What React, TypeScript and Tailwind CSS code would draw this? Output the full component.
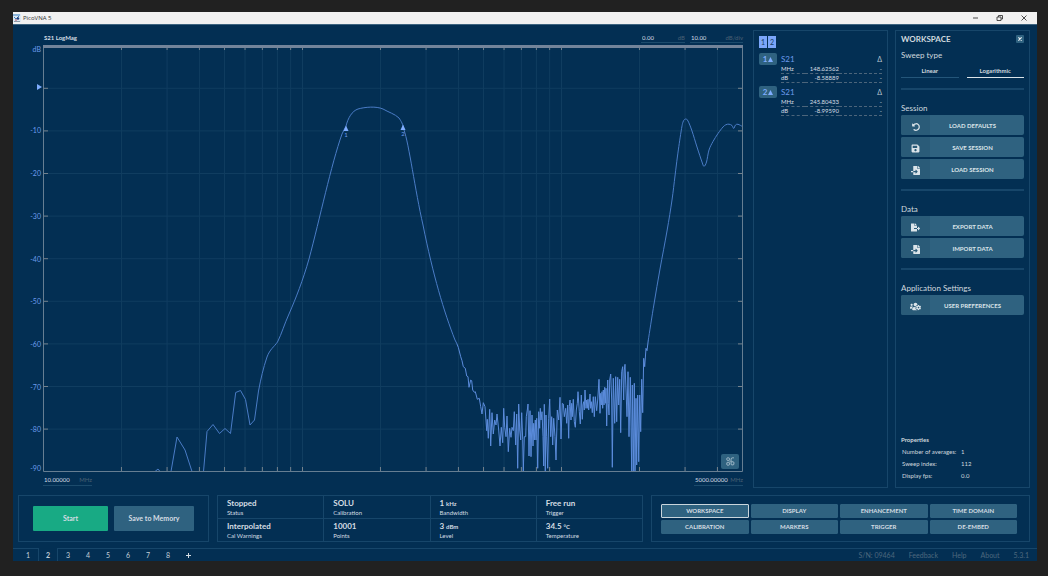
import React from "react";
import { FaUndoAlt, FaSave, FaFileExport, FaFileImport, FaUsersCog } from "react-icons/fa";

const PLOT = { left: 43.5, right: 742.5, top: 46, bottom: 471.5, decade: 259, zeroDb: 88.3, step: 42.6 };

const freqX = (mhz: number) => PLOT.left + PLOT.decade * Math.log10(mhz / 10);

const gridFreqs = [1, 10, 100, 1000].flatMap((decade) =>
  [1, 2, 3, 4, 5, 6, 7, 8, 9].map((n) => n * decade)
).filter((f) => f > 10 && f < 5000);

const gridRows = Array.from({ length: 9 }, (_, i) => PLOT.zeroDb + i * PLOT.step);

const lowBand =
  "M155 471.5L158 469L160 471.5M171 471.5L177 437L185 450L192 471.5M203.5 471.5L207 431.5L213 424.5L219.5 433.5L225 428.5L230.5 433.5L235.7 392.5L240.5 390.5L245.5 399.5L250 425L254.5 420L258.5 391C261 378 263 369 267 357C270 349 274 347 277.5 342C282 333 284 325 289 314C296 298 303 280 309 259C320 218 331 165 342 134L346 126C348 118 352 111 358 109C365 107 376 106 383 109C388 112 395 114 399 118C401 121 403 124 404 130C409 144 415 190 423 225C433 275 444 312 455 340L456.7 343.3";

const highBand: [number, number][] = [
  [648.3, 340], [654, 304], [660, 269], [667, 231], [672, 200], [675, 176], [677.5, 156], [681, 132], [683, 122],
  [685.5, 119], [688, 121], [692, 131], [697, 147], [702, 162], [704, 166.3], [706.5, 162], [709, 150], [713, 141.5],
  [718, 133.500], [723, 127], [726, 124.700], [729, 124.200], [732, 125.500], [733.700, 128.500], [735.500, 125], [738, 124.300], [742.500, 126.500],
];

// Catmull-Rom spline through the given points.
function smooth(points: [number, number][]) {
  let d = `M${points[0][0]} ${points[0][1]}`;
  for (let i = 0; i < points.length - 1; i++) {
    const a = points[Math.max(i - 1, 0)];
    const b = points[i];
    const c = points[i + 1];
    const e = points[Math.min(i + 2, points.length - 1)];
    const c1 = [b[0] + (c[0] - a[0]) / 6, b[1] + (c[1] - a[1]) / 6];
    const c2 = [c[0] - (e[0] - b[0]) / 6, c[1] - (e[1] - b[1]) / 6];
    d += `C${c1[0]} ${c1[1]} ${c2[0]} ${c2[1]} ${c[0]} ${c[1]}`;
  }
  return d;
}

// Noise floor samples at three units per pixel, measured from (440, 340).
const noise: number[] = [
  50, 10, 55, 22, 62, 50, 66, 62, 70, 80, 76, 85, 80, 108, 84, 110, 87, 142, 92, 120, 95, 122, 98, 150, 103, 157, 106, 155,
  112, 178, 118, 175, 122, 200, 126, 222,
  130, 188, 135, 200, 140, 272, 142, 238, 145, 295, 149, 208, 152, 318, 156, 218, 160, 282, 164, 240, 168, 255, 171, 222,
  176, 270, 180, 318, 184, 262, 188, 308, 191, 205, 194, 262, 198, 290, 201, 228, 205, 335, 209, 265, 213, 292, 216, 262,
  220, 272, 223, 215, 227, 315, 230, 222, 233, 385, 236, 192, 239, 270, 242, 300, 245, 218, 248, 298, 250, 393, 253, 290,
  257, 290, 259, 230, 262, 210, 264, 192, 267, 348, 270, 212, 273, 350, 276, 225, 279, 318, 281, 250, 283, 300, 286, 240,
  288, 300, 290, 235,
  293, 385, 296, 215, 299, 265, 301, 205, 303, 240, 306, 215, 309, 290, 311, 378, 313, 193, 316, 393, 318, 225, 320, 290,
  323, 385, 326, 235, 329, 177, 332, 290, 335, 230, 338, 315, 341, 235, 345, 290, 348, 360, 352, 210, 356, 240, 360, 172,
  363, 297, 367, 190, 370, 192, 373, 230, 377, 205, 380, 250, 383, 195, 386, 295, 388, 200, 390, 180, 393, 240, 395, 190,
  397, 230, 400, 178,
  403, 245, 406, 262, 409, 210, 412, 190, 414, 155, 418, 215, 421, 252, 424, 165, 427, 238, 429, 195, 431, 185, 433, 210,
  435, 150, 438, 205, 440, 180, 442, 205,
  444, 178, 446, 210, 450, 162, 452, 205, 454, 185, 457, 218, 460, 170, 463, 230, 466, 170, 470, 212, 473, 180, 477, 118,
  480, 220, 482, 160, 484, 195, 486, 155,
  488, 205, 490, 150, 492, 195, 494, 142, 496, 190, 498, 145, 500, 258, 503, 120, 505, 190, 507, 225, 509, 120, 512, 102,
  515, 180, 517, 382, 520, 115,
  524, 250, 527, 110, 530, 245, 533, 112, 536, 195, 539, 118, 542, 278, 545, 95, 548, 80, 551, 180, 553, 90, 555, 73,
  558, 150, 561, 230, 564, 95, 567, 290, 571, 112, 573, 255, 575, 393, 577, 135, 580, 393, 583, 130, 585, 393, 588, 175,
  590, 375,
  593, 165, 596, 365, 599, 165, 602, 275, 605, 118, 608, 218, 611, 55, 614, 80, 618, 25, 621, 32, 625, 0,
];

const noisePath =
  "M" +
  Array.from({ length: noise.length / 2 }, (_, i) =>
    `${(440 + noise[2 * i] / 3).toFixed(1)} ${(340 + noise[2 * i + 1] / 3).toFixed(1)}`
  ).join("L");

function Plot() {
  return (
    <svg
      className="h-0 min-h-[300px] w-full grow"
      viewBox="43 45 700 427"
      preserveAspectRatio="none"
      role="img"
      aria-label="S21 LogMag"
    >
      <g stroke="#103d60" strokeWidth="1">
        {gridFreqs.map((f) => (
          <line key={f} x1={freqX(f)} x2={freqX(f)} y1="48" y2="471" />
        ))}
        {gridRows.map((y) => (
          <line key={y} x1="44" x2="742" y1={y} y2={y} />
        ))}
      </g>
      <g stroke="#75828d" strokeWidth="1">
        {gridFreqs.map((f) => (
          <path key={f} d={`M${freqX(f)} 47v3M${freqX(f)} 467v4`} />
        ))}
        {gridRows.map((y) => (
          <path key={y} d={`M44 ${y}h4M738 ${y}h4`} />
        ))}
      </g>
      <g fill="none" strokeLinejoin="round">
        <path d={lowBand} stroke="#4a7cc6" strokeWidth="1" />
        <path d={noisePath} stroke="#5b8cdc" strokeWidth="1" />
        <path d={smooth(highBand)} stroke="#4a7cc6" strokeWidth="1" />
      </g>
      <path d="M43.5 45V471.5H742.5V45" fill="none" stroke="#667e92" strokeWidth="1" />
      <rect x="43" y="45" width="700" height="3" fill="#73849a" />
      <path d="M343.5 131l2.5-5.500 2.500 5.500zM400.500 130l2.500-5.500 2.500 5.500z" fill="#7fadff" />
      <g fill="#6c9cec" fontSize="6" fontFamily="Lato, sans-serif" textAnchor="middle">
        <text x="346" y="137">1</text>
        <text x="403" y="136">2</text>
      </g>
    </svg>
  );
}

function Underlined({ label, value, unit, className }: { label: string; value: string; unit: string; className: string }) {
  return (
    <label className={"flex items-center border-b border-[#1c4b6c] pl-px " + className}>
      <input aria-label={label} defaultValue={value} className="w-0 min-w-0 grow bg-transparent text-[#d5dde3] outline-none" />
      <span className="text-[#4a6073]">{unit}</span>
    </label>
  );
}

function Chart() {
  const levels = ["", "-10", "-20", "-30", "-40", "-50", "-60", "-70", "-80", "-90"];
  return (
    <section className="flex min-w-0 grow pt-[9px] pr-[10px] text-[6px] leading-[8px]">
      <div className="flex w-[30px] flex-col pt-[11px] pb-4 text-right text-[7px] leading-[8px] text-[#6c9cec]">
        {levels.map((level, i) => (
          <div key={i} className="flex flex-1 flex-col items-end justify-end pr-[2px]">
            {i === 0 && (
              <>
                <span className="mb-auto">dB</span>
                <svg viewBox="0 0 5 6" className="h-[6px] w-[5px] translate-x-px translate-y-[2px]">
                  <path d="M0 0l5 3-5 3z" fill="#7fadff" />
                </svg>
              </>
            )}
            {i > 0 && <span className={i === 9 ? "" : "translate-y-1/2"}>{level}</span>}
          </div>
        ))}
      </div>
      <div className="relative flex min-w-0 grow flex-col">
        <div className="flex h-[11px] items-start justify-between">
          <h2 className="pl-px font-bold text-[#d5dde3]">S21 LogMag</h2>
          <div className="flex gap-[5px]">
            <Underlined label="Reference level" value="0.00" unit="dB" className="w-11" />
            <Underlined label="Scale per division" value="10.00" unit="dB/div" className="w-[53px]" />
          </div>
        </div>
        <Plot />
        <div className="flex h-4 items-start justify-between pt-[3px]">
          <Underlined label="Start frequency" value="10.00000" unit="MHz" className="h-[11px] w-[49px]" />
          <Underlined label="Stop frequency" value="5000.00000" unit="MHz" className="h-[11px] w-[49px]" />
        </div>
        <button
          aria-label="Plot layout"
          className="absolute right-[4px] bottom-[19px] flex h-[15px] w-[18px] items-center justify-center rounded-[2px] bg-[#2f6280]"
        >
          <svg viewBox="0 0 16 16" className="size-[9px]" fill="none" stroke="#b5cad6" strokeWidth="1.500">
            <rect x="1.500" y="1.500" width="4.500" height="4.500" rx="1" />
            <rect x="1.500" y="9.500" width="4.500" height="5" rx="1" />
            <rect x="9" y="8.500" width="5" height="5.500" rx="1.500" />
            <path d="M9 9V4a2.500 2.500 0 0 1 2.500-2.500h2.500M6 7.500h2" />
          </svg>
        </button>
      </div>
    </section>
  );
}

function MarkerEntry({ id, freq, level }: { id: string; freq: string; level: string }) {
  return (
    <div className="flex items-start gap-1">
      <button className="flex h-3 w-[18px] shrink-0 items-center justify-center gap-px rounded-[2px] bg-[#2f6280] text-[8px] font-bold text-[#7fadff]">
        {id}
        <svg viewBox="0 0 5 5" className="size-[5px]">
          <path d="M2.500 0L5 5H0z" fill="#7fadff" />
        </svg>
      </button>
      <table className="w-full border-collapse text-[6px] leading-[8px] text-[#d5dde3]">
        <caption className="h-3 caption-top text-left text-[8px] leading-[12px] text-[#6c9cec]">
          <span className="flex justify-between">
            S21
            <span className="text-[7px] text-[#b8c6cf]">Δ</span>
          </span>
        </caption>
        <tbody>
          <tr className="border-b border-dashed border-[#4c657b]">
            <td className="w-6">MHz</td>
            <td className="w-[34px] text-right">{freq}</td>
            <td className="text-right">-</td>
          </tr>
          <tr className="border-b border-dashed border-[#4c657b]">
            <td>dB</td>
            <td className="text-right">{level}</td>
            <td className="text-right">-</td>
          </tr>
        </tbody>
      </table>
    </div>
  );
}

function Markers() {
  return (
    <section className="mt-[5px] flex w-[135px] shrink-0 flex-col border border-[#17466a] px-[5px] pt-[5px]">
      <div className="mb-[5px] flex gap-px text-[7px] text-[#143a5c]">
        <button className="h-3 w-2 bg-[#7ba6fa]">1</button>
        <button className="h-3 w-2 bg-[#7ba6fa]">2</button>
      </div>
      <div className="flex flex-col gap-[3px]">
        <MarkerEntry id="1" freq="148.62562" level="-8.58889" />
        <MarkerEntry id="2" freq="245.80433" level="-8.99590" />
      </div>
    </section>
  );
}

function ActionButton({ icon, children }: { icon: React.ReactNode; children: React.ReactNode }) {
  return (
    <button className="flex h-5 w-full items-stretch overflow-hidden rounded-[2px] bg-[#2f6280] text-[6px] font-bold text-[#dbe4e9]">
      <span className="flex w-[29px] items-center justify-center bg-[#2a5b78] pt-[3px] text-[9px]">{icon}</span>
      <span className="flex grow items-center justify-center pr-[9px]">{children}</span>
    </button>
  );
}

function Group({ title, children }: { title: string; children: React.ReactNode }) {
  return (
    <div className="mt-[10px] border-t-2 border-[#17466a] pt-[13px]">
      <h3 className="mb-[2px] text-[8px] leading-[10px]">{title}</h3>
      <div className="flex flex-col gap-[2px]">{children}</div>
    </div>
  );
}

function Workspace() {
  return (
    <aside className="mt-[5px] ml-[7px] flex w-[135px] shrink-0 flex-col border border-[#17466a] px-[5px] pt-[2px] text-[#d0d9df]">
      <div className="flex h-3 items-center justify-between">
        <h2 className="text-[8px] font-bold">WORKSPACE</h2>
        <button aria-label="Close" className="flex size-2 items-center justify-center rounded-[1px] bg-[#2f6280]">
          <svg viewBox="0 0 6 6" className="size-[4px]" stroke="#e6edf1" strokeWidth="1.800">
            <path d="M.5.5l5 5M5.500.5l-5 5" />
          </svg>
        </button>
      </div>
      <h3 className="mt-[5px] text-[8px] leading-[10px]">Sweep type</h3>
      <div className="mt-[6px] flex gap-2 text-[6px] leading-[10px] font-bold">
        <button className="flex-1 border-b border-[#24567a] pb-px">Linear</button>
        <button className="flex-1 border-b border-[#dbe4e9] pb-px">Logarithmic</button>
      </div>
      <Group title="Session">
        <ActionButton icon={<FaUndoAlt className="size-2" />}>LOAD DEFAULTS</ActionButton>
        <ActionButton icon={<FaSave />}>SAVE SESSION</ActionButton>
        <ActionButton icon={<FaFileImport />}>LOAD SESSION</ActionButton>
      </Group>
      <Group title="Data">
        <ActionButton icon={<FaFileExport />}>EXPORT DATA</ActionButton>
        <ActionButton icon={<FaFileImport />}>IMPORT DATA</ActionButton>
      </Group>
      <Group title="Application Settings">
        <ActionButton icon={<FaUsersCog className="size-[11px]" />}>USER PREFERENCES</ActionButton>
      </Group>
      <div className="mt-auto pb-[5px] text-[6px] leading-[12px]">
        <h3 className="font-bold">Properties</h3>
        <dl className="grid grid-cols-[59px_1fr] pl-px">
          <dt>Number of averages:</dt>
          <dd>1</dd>
          <dt>Sweep index:</dt>
          <dd>112</dd>
          <dt>Display fps:</dt>
          <dd>0.0</dd>
        </dl>
      </div>
    </aside>
  );
}

const stats: [string, string, string][] = [
  ["Stopped", "", "Status"],
  ["SOLU", "", "Calibration"],
  ["1", "kHz", "Bandwidth"],
  ["Free run", "", "Trigger"],
  ["Interpolated", "", "Cal Warnings"],
  ["10001", "", "Points"],
  ["3", "dBm", "Level"],
  ["34.5", "°C", "Temperature"],
];

const pages = ["WORKSPACE", "DISPLAY", "ENHANCEMENT", "TIME DOMAIN", "CALIBRATION", "MARKERS", "TRIGGER", "DE-EMBED"];

function ControlRow() {
  return (
    <div className="mt-[7px] flex h-[47px] gap-2 pr-[7px] pl-[5px] text-[#d5dde3]">
      <div className="flex w-[191px] shrink-0 items-center gap-[6px] border border-[#17466a] px-[14px] text-[7px] font-bold">
        <button className="h-[25px] w-[77px] rounded-[1px] bg-[#18aa84]">Start</button>
        <button className="h-[25px] w-[82px] rounded-[1px] bg-[#2f6280]">Save to Memory</button>
      </div>
      <dl className="grid grow grid-cols-4 grid-rows-2 gap-px border border-[#17466a] bg-[#17466a]">
        {stats.map(([value, unit, name]) => (
          <div key={name} className="flex flex-col-reverse justify-center bg-[#032f53] pl-[9px]">
            <dt className="text-[6px] leading-[8px]">{name}</dt>
            <dd className="text-[8px] leading-[10px] font-bold">
              {value} <span className="text-[6px]">{unit}</span>
            </dd>
          </div>
        ))}
      </dl>
      <nav className="grid w-[379px] shrink-0 grid-cols-4 content-center gap-[2px] border border-[#17466a] pr-3 pl-[9px] text-[6px] font-bold">
        {pages.map((page, i) => (
          <button
            key={page}
            className={
              "h-[14px] rounded-[1px] bg-[#2f6280] " + (i === 0 ? "border border-[#c9d5dc]" : "border border-[#2f6280]")
            }
          >
            {page}
          </button>
        ))}
      </nav>
    </div>
  );
}

function TabBar() {
  const tabs = ["1", "2", "3", "4", "5", "6", "7", "8"];
  return (
    <footer className="mt-[6px] flex h-[13px] text-[7px] leading-[12px] text-[#c3d0d8]">
      {tabs.map((tab) => (
        <button
          key={tab}
          className={
            tab === "2"
              ? "w-5 border-x border-[#17466a] pt-px font-bold"
              : tab === "1"
                ? "w-[25px] border-t border-[#17466a] pl-[5px]"
                : "w-5 border-t border-[#17466a]"
          }
        >
          {tab}
        </button>
      ))}
      <button aria-label="Add tab" className="flex w-5 items-center justify-center border-t border-[#17466a]">
        <svg viewBox="0 0 5 5" className="size-[5px]" stroke="#d5dde3" strokeWidth="1">
          <path d="M2.500 0v5M0 2.500h5" />
        </svg>
      </button>
      <div className="flex grow justify-end gap-[14px] border-t border-[#17466a] pr-2 text-[#4d687e]">
        <span>S/N: 09464</span>
        <a href="#feedback">Feedback</a>
        <a href="#help">Help</a>
        <a href="#about">About</a>
        <span>5.3.1</span>
      </div>
    </footer>
  );
}

export default function App() {
  return (
    <div className="flex min-h-screen bg-[#212121] pt-3 pr-[11px] pb-[15px] pl-[13px] font-['Lato',sans-serif]">
      <div className="flex min-w-0 grow flex-col bg-[#032f53]">
        <header className="flex h-[13px] items-center border-b border-[#3d6480] bg-[#f1f1f1] text-[#2c2c2c]">
          <svg viewBox="0 0 8 8" className="size-2">
            <rect width="8" height="8" fill="#dce8f2" />
            <path d="M0 1h7M1 3l2 2 3-3" stroke="#3c82c4" fill="none" />
            <path d="M1 7.500h6" stroke="#8a9aa8" />
            <circle cx="5" cy="4.500" r="1.200" fill="#233c78" />
            <circle cx="3" cy="6" r=".8" fill="#b33a4c" />
          </svg>
          <h1 className="ml-[2px] font-['Open_Sans',sans-serif] text-[6px]">PicoVNA 5</h1>
          <div className="ml-auto flex pr-px">
            {["M1 4h5", "M1 3h4v3.500H1zM2.500 3V1.500h4V5H5", "M1.500 1.500l5 5M6.500 1.500l-5 5"].map((d, i) => (
              <button
                key={d}
                aria-label={["Minimize", "Restore", "Close"][i]}
                className="flex h-3 w-6 items-center justify-center"
              >
                <svg viewBox="0 0 8 8" className="size-2" fill="none" stroke="#3a3a3a" strokeWidth=".9">
                  <path d={d} />
                </svg>
              </button>
            ))}
          </div>
        </header>
        <main className="flex grow pr-[7px]">
          <Chart />
          <Markers />
          <Workspace />
        </main>
        <ControlRow />
        <TabBar />
      </div>
    </div>
  );
}
